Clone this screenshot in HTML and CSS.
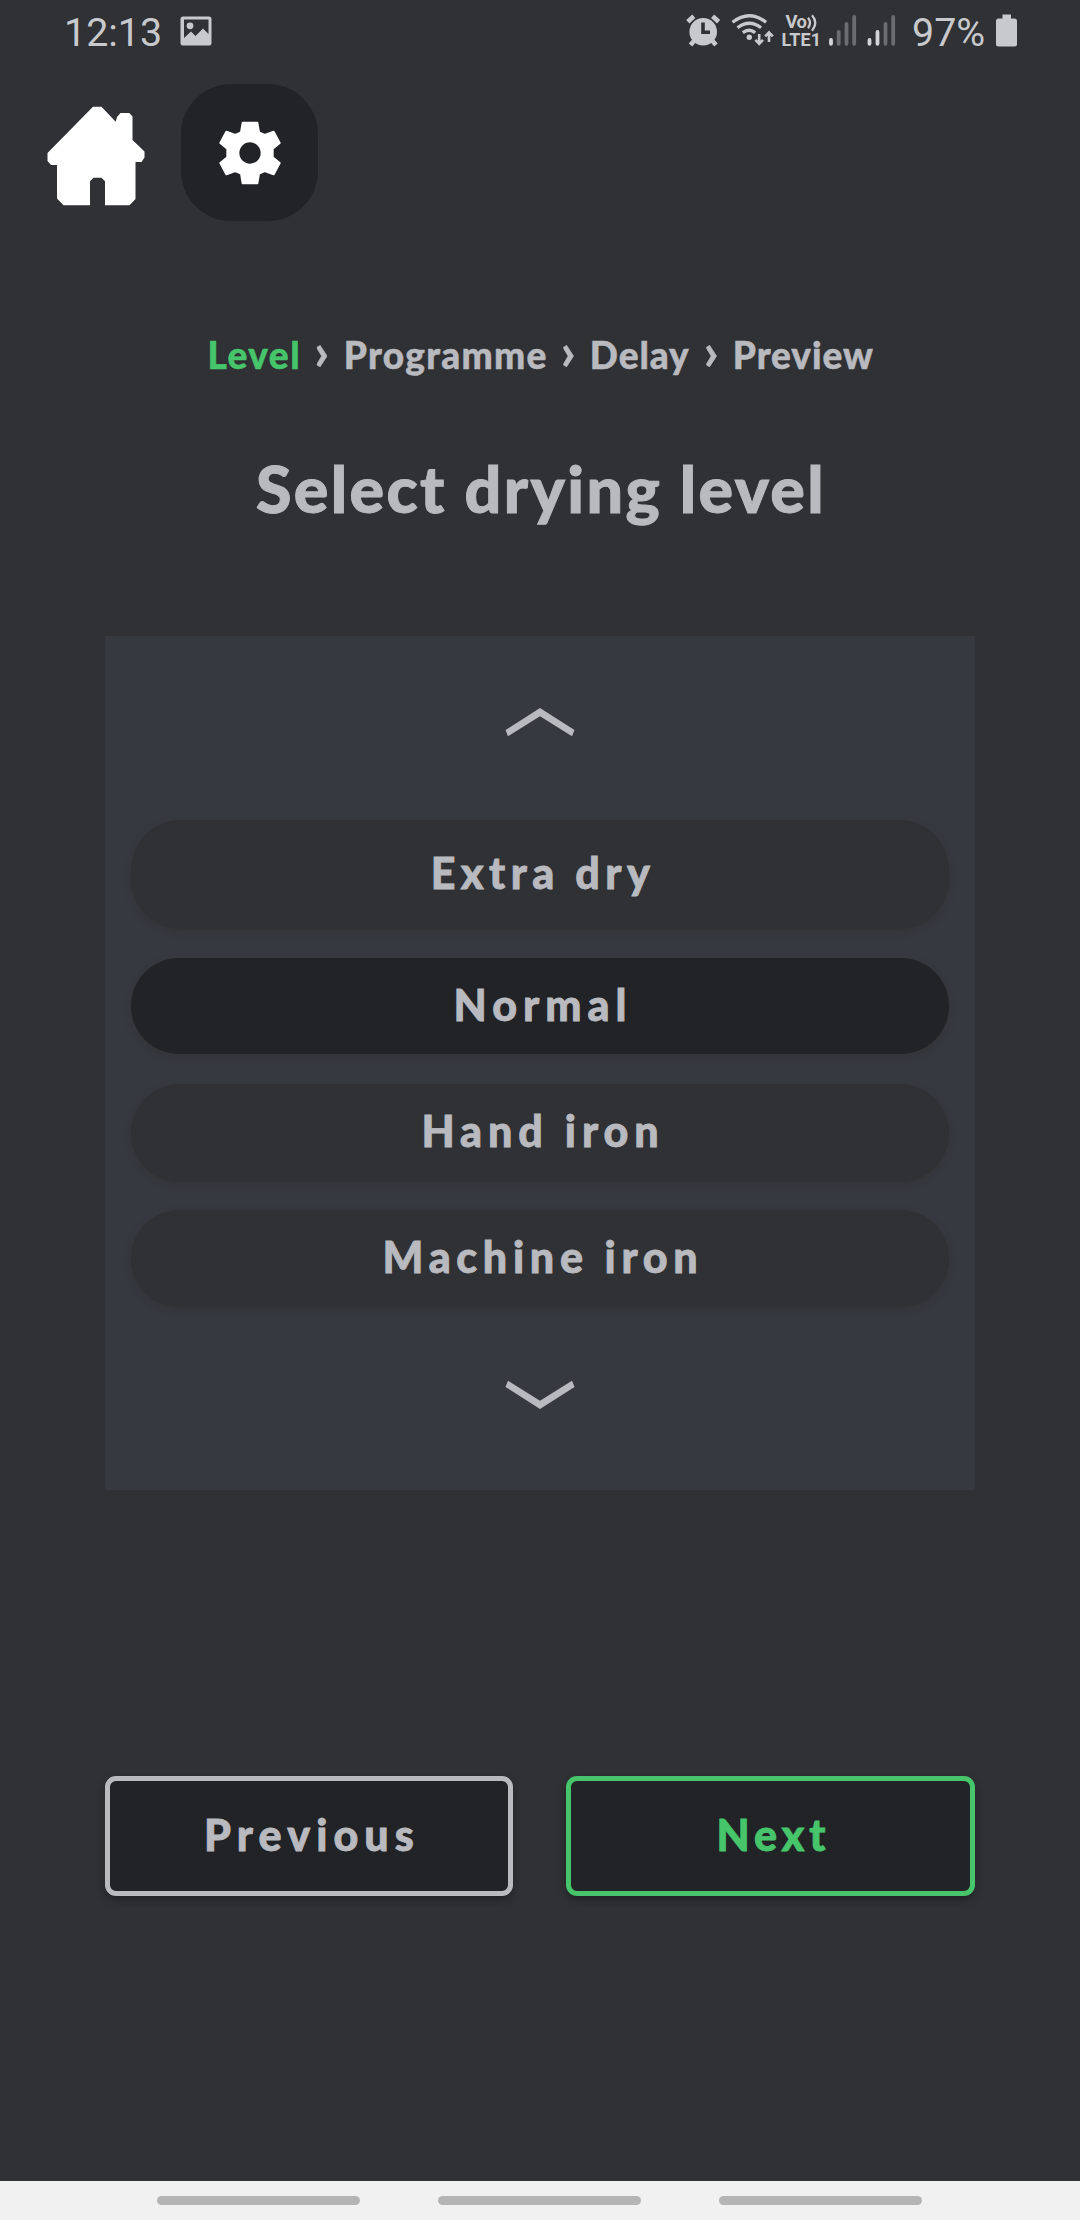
FILE: index.html
```html
<!DOCTYPE html>
<html lang="en">
<head>
<meta charset="utf-8">
<title>Select drying level</title>
<link rel="stylesheet" href="styles.css">
</head>
<body>
<header class="status">
  <span class="clock">12:13</span>
  <svg class="photo" width="32" height="30" viewBox="180 15.500 32 30"><path fill-rule="evenodd" d="M183 16h26q2.500 0 2.500 2.500v24q0 2.500-2.500 2.500h-26q-2.500 0-2.500-2.500v-24q0-2.500 2.500-2.500zM184 19v18.500l7-6.500 4.500 4.500 7.500-7.500 5.500 5.500V19z"/><circle cx="190" cy="25.300" r="3.400"/></svg>
  <svg class="indicators" width="230" height="60" viewBox="680 0 230 60">
    <circle cx="703.200" cy="31.800" r="13.800"/>
    <path class="line" stroke-width="4.600" d="M687.800 21.800l6-5.600M712.600 16.200l6 5.600M694 41l-3.500 4M712.500 41l3.500 4"/>
    <path class="cut" d="M703 22.500v9.800h7"/>
    <path class="line" stroke-width="3.300" d="M732.500 22.300q16.800-13 33.600 0M737.500 27.800q11.800-9 23.600 0M742.800 32.600q6.200-4.600 12.400 0"/>
    <circle cx="749.300" cy="37.300" r="2.700"/>
    <path class="line" stroke-width="2.600" d="M759.200 34v9M755.400 39.800l3.800 4 3.800-4M769 42v-9M765.200 36.400l3.800-4 3.800 4"/>
    <text x="785.500" y="28" font-size="18.500" textLength="21.500">Vo</text>
    <path class="line" stroke-width="2.300" d="M808 17.800q4 5 0 10.400M812 15.200q6.500 7.500 0 15.500"/>
    <text x="781.500" y="45.700" font-size="18" textLength="39.500">LTE1</text>
    <path class="bar" d="M831 40v3.800M869.500 40v3.800M877.500 32v11.800"/>
    <path class="bar dim" d="M838.700 32v11.800M846.500 24v19.800M854.200 17v26.800M885.500 24v19.800M893.200 17v26.800"/>
  </svg>
  <span class="percent">97%</span>
  <svg class="battery" width="21" height="33" viewBox="996 14 21 33"><path d="M1002.500 14.500h8.500v4h3.500q2.500 0 2.500 2.500v23q0 2.500-2.500 2.500h-16q-2.500 0-2.500-2.500v-23q0-2.500 2.500-2.500h4z"/></svg>
</header>

<nav class="toolbar">
  <svg class="home" width="98" height="100" viewBox="47 106 98 100"><path d="M93 106.700h8.500l14.200 15 1.300-4.700 3.500-4h8.700l3.300 3.500v23.500l12 11.500v6l-3 4.500h-6v37l-6 6.300H105v-24l-3.500-3.500h-8l-3.500 3.500v24H63.500l-6.500-6.800V165h-6l-3.500-4v-8z"/></svg>
  <div class="tile">
    <svg width="64" height="66" viewBox="-96 -99 192 198"><path class="gear" d="M-22 -91H22L27 -62 44 -54 71 -64 89 -30 68 -13V13L89 30 71 64 44 54 27 62 22 91H-22L-27 62 -44 54 -71 64 -89 30 -68 13V-13L-89 -30 -71 -64 -44 -54 -27 -62Z"/><circle class="hub" r="32"/></svg>
  </div>
</nav>

<div class="crumbs">
  <span class="current">Level</span><span class="sep">›</span><span>Programme</span><span class="sep">›</span><span class="tight">Delay</span><span class="sep">›</span><span class="tight">Preview</span>
</div>
<h1>Select drying level</h1>

<main class="picker">
  <svg class="arrow" width="70" height="30" viewBox="0 0 70 30"><path d="M.5 22L35 0 69.500 22 67 28.300 35 8.200 3 28.300z"/></svg>
  <div class="pill extra">Extra dry</div>
  <div class="pill selected">Normal</div>
  <div class="pill hand">Hand iron</div>
  <div class="pill machine">Machine iron</div>
  <svg class="arrow down" width="70" height="30" viewBox="0 0 70 30"><path d="M.5 7L35 29 69.500 7 67 .7 35 20.800 3 .7z"/></svg>
</main>

<div class="actions">
  <div class="button">Previous</div>
  <div class="button next">Next</div>
</div>

<footer class="gestures"><i></i><i></i><i></i></footer>
</body>
</html>
```
FILE: styles.css
```css
* { box-sizing: border-box; }
body {
  margin: 0;
  width: 1080px;
  height: 2220px;
  display: flex;
  flex-direction: column;
  overflow: hidden;
  background: #303135;
  color: #b9babf;
  font-family: Lato, "Open Sans", sans-serif;
  font-weight: 900;
}
svg { display: block; flex: none; }

/* status bar */
.status {
  height: 65px;
  display: flex;
  align-items: flex-start;
  padding-left: 64px;
  font: 400 39.4px/65px Roboto, sans-serif;
  color: #c8c9cc;
  fill: #c8c9cc;
}
.clock { width: 116px; }
.photo { margin-top: 15.5px; }
.indicators { margin-left: 468px; }
.indicators text { font-weight: 700; font-family: Roboto, sans-serif; }
.line { fill: none; stroke: #c8c9cc; }
.cut { fill: none; stroke: #303135; stroke-width: 3.6; }
.bar { fill: none; stroke: #d3d4d6; stroke-width: 3.8; stroke-linecap: round; }
.dim { stroke: #6b6c70; }
.percent { width: 84px; padding-left: 2px; margin-right: 2px; }
.battery { margin-top: 14px; }

/* home and settings */
.toolbar { height: 137px; margin-top: 19px; display: flex; padding-left: 47px; }
.home { margin-top: 22px; fill: #fff; }
.tile {
  width: 137px;
  height: 137px;
  margin-left: 36px;
  border-radius: 50px;
  background: #222327;
  display: flex;
  align-items: center;
  justify-content: center;
}
.gear { fill: #fff; stroke: #fff; stroke-width: 6; stroke-linejoin: round; }
.hub { fill: #222327; }

/* step trail */
.crumbs {
  height: 60px;
  margin-top: 104px;
  padding-left: 207.4px;
  display: grid;
  grid-template-columns: 106.6px 29.8px 216.7px 29.4px 113.6px 29.4px auto;
  font-size: 37px;
  line-height: 60px;
  letter-spacing: 1.3px;
  white-space: nowrap;
  -webkit-text-stroke: .5px currentColor;
}
.current { color: #47c56b; letter-spacing: 1.5px; }
.tight { letter-spacing: .9px; }
.sep { font-size: 52px; font-weight: 700; line-height: 50px; }
h1 {
  margin: 63px 0 0;
  padding-left: 2px;
  text-align: center;
  font-size: 64.5px;
  font-weight: 900;
  line-height: 80px;
  letter-spacing: 2.4px;
  -webkit-text-stroke: 1px currentColor;
}

/* level list */
.picker {
  width: 870px;
  height: 854px;
  margin: 108px 0 0 105px;
  padding: 72px 26px 0;
  background: #363940;
}
.arrow { margin: 0 auto 82px; fill: #b9babf; }
.arrow.down { margin: 73px auto 0; }
.pill {
  height: 97px;
  margin-bottom: 28px;
  padding: 0 0 4px 6px;
  border-radius: 50px;
  background: #303135;
  box-shadow: 0 3px 6px rgba(48, 48, 48, .5);
  display: flex;
  align-items: center;
  justify-content: center;
  font-size: 43px;
  letter-spacing: 5.7px;
}
.pill, .button { -webkit-text-stroke: .8px currentColor; }
.extra { height: 109px; margin-bottom: 29px; letter-spacing: 5.45px; }
.selected { height: 96px; margin-bottom: 30px; background: #222327; letter-spacing: 6px; }
.hand { height: 98px; padding-bottom: 6px; letter-spacing: 5.9px; }
.machine { margin-bottom: 0; }

/* buttons */
.actions {
  margin: 286px 105px 0;
  display: grid;
  grid-template-columns: 408px 409px;
  justify-content: space-between;
}
.button {
  height: 120px;
  padding: 0 0 3px 6px;
  border: 5px solid #b9babf;
  border-radius: 11px;
  background: #222327;
  box-shadow: 0 4px 7px rgba(20, 20, 22, .45);
  display: flex;
  align-items: center;
  justify-content: center;
  font-size: 43px;
  letter-spacing: 6.1px;
}
.next { border-color: #47c56b; color: #47c56b; letter-spacing: 4.9px; }

/* gesture bar */
.gestures {
  height: 39px;
  margin-top: auto;
  padding: 15px 0 0 157px;
  display: flex;
  gap: 78px;
  background: #f1f1f1;
}
.gestures i { width: 203px; height: 9px; border-radius: 5px; background: #b5b5b5; }
```
